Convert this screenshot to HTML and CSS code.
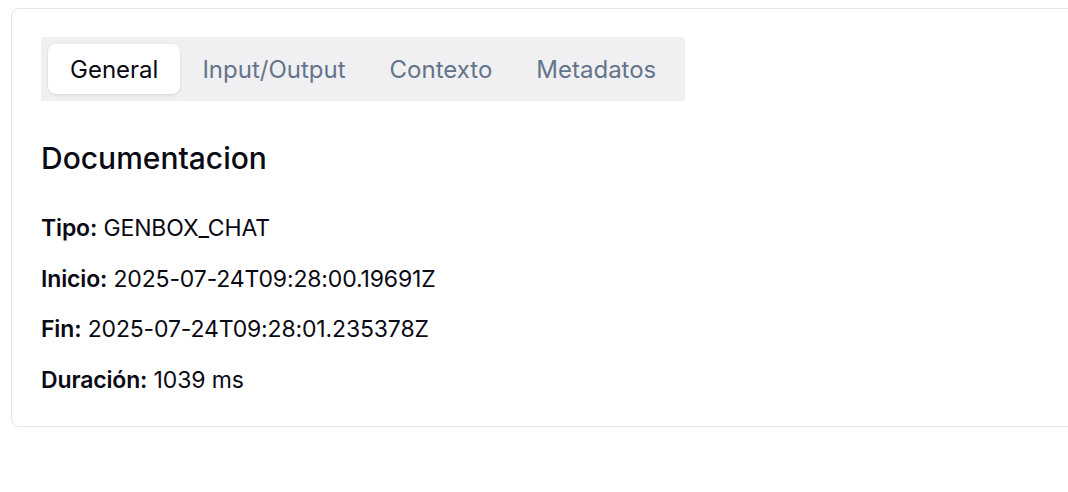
FILE: index.html
```html
<!DOCTYPE html>
<html lang="es">
<head>
    <meta charset="UTF-8">
    <title>Documentacion</title>
    <link rel="stylesheet" href="styles.css">
</head>
<body>
    <div class="card">
        <div class="tabs">
            <button class="tab active">General</button>
            <button class="tab">Input/Output</button>
            <button class="tab">Contexto</button>
            <button class="tab">Metadatos</button>
        </div>

        <h2 class="title">Documentacion</h2>

        <div class="details">
            <p><strong>Tipo:</strong> GENBOX_CHAT</p>
            <p><strong>Inicio:</strong> 2025-07-24T09:28:00.19691Z</p>
            <p><strong>Fin:</strong> 2025-07-24T09:28:01.235378Z</p>
            <p><strong>Duración:</strong> 1039 ms</p>
        </div>
    </div>
</body>
</html>
```

FILE: styles.css
```css
body {
    margin: 0;
    padding: 8px 0 0 11px;
    font-family: Inter, "Noto Sans", sans-serif;
    color: #0a0a14;
    background: #fff;
}
.card {
    width: 1100px;
    height: 419px;
    box-sizing: border-box;
    border: 1px solid #e4e4e7;
    border-radius: 8px;
    padding: 28px 29px;
}
.tabs {
    display: inline-flex;
    align-items: center;
    padding: 7px;
    background: #f0f0f3;
    border-radius: 2px;
}
.tab {
    height: 50px;
    padding: 0 22px;
    font-family: inherit;
    font-size: 24px;
    color: #64748b;
    background: none;
    border: none;
    border-radius: 8px;
    cursor: pointer;
}
.tab.active {
    color: #0a0a14;
    background: #fff;
    box-shadow: 0 1px 3px rgba(0, 0, 0, 0.12);
}
.title {
    margin: 39px 0 39px;
    font-size: 30px;
    font-weight: 500;
    line-height: 1.2;
}
.details p {
    margin: 0 0 23px;
    font-size: 23px;
    line-height: 1.2;
    letter-spacing: -0.15px;
}
.details strong {
    font-weight: 600;
}
```
